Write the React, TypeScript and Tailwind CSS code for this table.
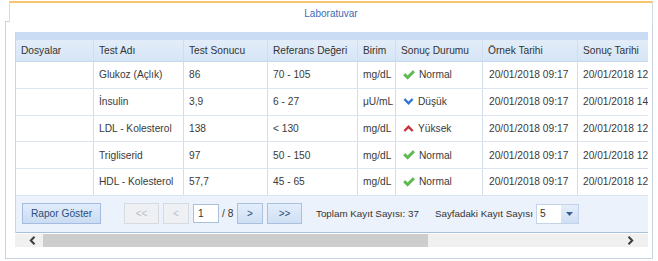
import React from "react";

const cols = [
  { label: "Dosyalar", w: "w-[78px]" },
  { label: "Test Adı", w: "w-[90px]" },
  { label: "Test Sonucu", w: "w-[84px]" },
  { label: "Referans Değeri", w: "w-[90px]" },
  { label: "Birim", w: "w-[38px]" },
  { label: "Sonuç Durumu", w: "w-[87px]" },
  { label: "Örnek Tarihi", w: "w-[95px]" },
  { label: "Sonuç Tarihi", w: "w-[95px]" },
];

type Status = "normal" | "low" | "high";

const rows: { name: string; val: string; ref: string; unit: string; status: Status; s1: string; s2: string }[] = [
  { name: "Glukoz (Açlık)", val: "86", ref: "70 - 105", unit: "mg/dL", status: "normal", s1: "20/01/2018 09:17", s2: "20/01/2018 12:33" },
  { name: "İnsulin", val: "3,9", ref: "6 - 27", unit: "μU/mL", status: "low", s1: "20/01/2018 09:17", s2: "20/01/2018 14:05" },
  { name: "LDL - Kolesterol", val: "138", ref: "< 130", unit: "mg/dL", status: "high", s1: "20/01/2018 09:17", s2: "20/01/2018 12:33" },
  { name: "Trigliserid", val: "97", ref: "50 - 150", unit: "mg/dL", status: "normal", s1: "20/01/2018 09:17", s2: "20/01/2018 12:33" },
  { name: "HDL - Kolesterol", val: "57,7", ref: "45 - 65", unit: "mg/dL", status: "normal", s1: "20/01/2018 09:17", s2: "20/01/2018 12:33" },
];

function StatusIcon({ s }: { s: Status }) {
  if (s === "normal")
    return (
      <svg width="12" height="10" viewBox="0 0 12 10" className="shrink-0">
        <path d="M0.5 5.2 L2.3 3.6 L4.6 5.8 L10 0.6 L11.6 2.2 L4.6 9.2 Z" fill="#5cc04a" stroke="#3f9a32" strokeWidth="0.5" />
      </svg>
    );
  if (s === "low")
    return (
      <svg width="11" height="8" viewBox="0 0 11 8" className="shrink-0">
        <path d="M0.5 1.8 L2.2 0.3 L5.5 3.6 L8.8 0.3 L10.5 1.8 L5.5 7 Z" fill="#2f78d2" />
      </svg>
    );
  return (
    <svg width="11" height="8" viewBox="0 0 11 8" className="shrink-0">
      <path d="M0.5 6.2 L2.2 7.7 L5.5 4.4 L8.8 7.7 L10.5 6.2 L5.5 1 Z" fill="#c8323a" />
    </svg>
  );
}

const statusText: Record<Status, string> = { normal: "Normal", low: "Düşük", high: "Yüksek" };

function Cell({ w, children, last }: { w: string; children?: React.ReactNode; last?: boolean }) {
  return (
    <div className={`${w} shrink-0 h-full flex items-center px-[5px] whitespace-nowrap overflow-hidden ${last ? "" : "border-r border-[#d3deec]"}`}>
      {children}
    </div>
  );
}

function PagerBtn({ label, disabled, w }: { label: string; disabled?: boolean; w: string }) {
  return (
    <div
      className={`${w} h-[21px] flex items-center justify-center border text-[10px] ${
        disabled
          ? "border-[#d6dbe2] bg-[#eef0f3] text-[#b8bec8]"
          : "border-[#a9c0df] bg-gradient-to-b from-[#e4eefb] to-[#cfdff4] text-[#2b4a78]"
      }`}
    >
      {label}
    </div>
  );
}

export default function App() {
  return (
    <div
      className="w-[658px] h-[261px] bg-white overflow-hidden px-[5px] pt-[1px] text-[#333]"
      style={{ fontFamily: '"Liberation Sans", Arial, sans-serif' }}
    >
      {/* tab header */}
      <div className="flex h-[21px]">
        <div className="w-[4px] border-b border-[#c9d4e2]" />
        <div className="flex-1 border-t-2 border-l border-r border-t-[#f6c56f] border-l-[#d4dbe5] border-r-[#d4dbe5] flex justify-center pt-[3px] text-[10px] text-[#3d6cb4]">
          Laboratuvar
        </div>
      </div>

      {/* panel */}
      <div className="h-[237px] border-l border-r border-b border-[#c9d4e2] pt-[10px] pl-[9px]">
        <div className="w-[633px] overflow-hidden">
          {/* grid */}
          <div className="border-l border-[#c5d6ec]">
            <div className="h-[8px] bg-[#c9dcf3] w-[700px]" />
            <div className="h-[22px] flex bg-gradient-to-b from-[#e3edf9] to-[#d6e5f6] border-b border-[#c8d8ee] text-[10.2px] text-[#333] w-[700px]">
              {cols.map((c, i) => (
                <Cell key={c.label} w={c.w} last={i === cols.length - 1}>
                  {c.label}
                </Cell>
              ))}
            </div>
            {rows.map((r) => (
              <div key={r.name} className="h-[26.8px] flex border-b border-[#dbe4f0] bg-white text-[10.2px] text-[#3a3a3a] w-[700px]">
                <Cell w={cols[0].w} />
                <Cell w={cols[1].w}>{r.name}</Cell>
                <Cell w={cols[2].w}>{r.val}</Cell>
                <Cell w={cols[3].w}>{r.ref}</Cell>
                <Cell w={cols[4].w}>{r.unit}</Cell>
                <Cell w={cols[5].w}>
                  <div className="flex items-center gap-[4px] pl-[2px]">
                    <StatusIcon s={r.status} />
                    <span>{statusText[r.status]}</span>
                  </div>
                </Cell>
                <Cell w={cols[6].w}>
                  <span className="pl-[1px]">{r.s1}</span>
                </Cell>
                <Cell w={cols[7].w} last>
                  {r.s2}
                </Cell>
              </div>
            ))}
            {/* pager */}
            <div className="h-[37px] bg-[#ebf2fb] border-b border-[#a8bfdd] flex items-center pl-[6px] text-[9.8px] text-[#333]">
              <div className="w-[79px] h-[21px] flex items-center justify-center border border-[#a3bce0] bg-gradient-to-b from-[#e2ecfa] to-[#cadcf3] text-[#2d4d7c] text-[10.2px]">
                Rapor Göster
              </div>
              <div className="w-[23px]" />
              <PagerBtn label="<<" disabled w="w-[35px]" />
              <div className="w-[4px]" />
              <PagerBtn label="<" disabled w="w-[26px]" />
              <div className="w-[4px]" />
              <div className="w-[26px] h-[19px] bg-white border border-[#a9bfdc] flex items-center pl-[4px] text-[10.2px]">1</div>
              <div className="w-[18px] pl-[3px] text-[10.2px]">/ 8</div>
              <PagerBtn label=">" w="w-[26px]" />
              <div className="w-[4px]" />
              <PagerBtn label=">>" w="w-[35px]" />
              <div className="pl-[14px] whitespace-nowrap">Toplam Kayıt Sayısı: 37</div>
              <div className="pl-[16px] whitespace-nowrap">Sayfadaki Kayıt Sayısı</div>
              <div className="ml-[3px] w-[43px] h-[20px] bg-white border border-[#c3d3e8] flex items-center text-[10.2px]">
                <div className="flex-1 pl-[3px]">5</div>
                <div className="w-[17px] h-full bg-gradient-to-b from-[#e4eefb] to-[#cfdff4] flex items-center justify-center">
                  <svg width="7" height="4" viewBox="0 0 7 4">
                    <path d="M0 0 L7 0 L3.5 4 Z" fill="#3b5f94" />
                  </svg>
                </div>
              </div>
            </div>
          </div>
          {/* scrollbar */}
          <div className="mt-[1px] h-[13px] flex bg-[#f0f0f0]">
            <div className="w-[28px] h-full flex items-center pl-[14px]">
              <svg width="7" height="9" viewBox="0 0 7 9">
                <path d="M5.5 0.8 L1.8 4.5 L5.5 8.2" fill="none" stroke="#3c3c3c" strokeWidth="2" />
              </svg>
            </div>
            <div className="w-[385px] h-full bg-[#cdcdcd]" />
            <div className="flex-1" />
            <div className="w-[36px] h-full flex items-center justify-center">
              <svg width="7" height="9" viewBox="0 0 7 9">
                <path d="M1.5 0.8 L5.2 4.5 L1.5 8.2" fill="none" stroke="#3c3c3c" strokeWidth="2" />
              </svg>
            </div>
          </div>
        </div>
      </div>
    </div>
  );
}
